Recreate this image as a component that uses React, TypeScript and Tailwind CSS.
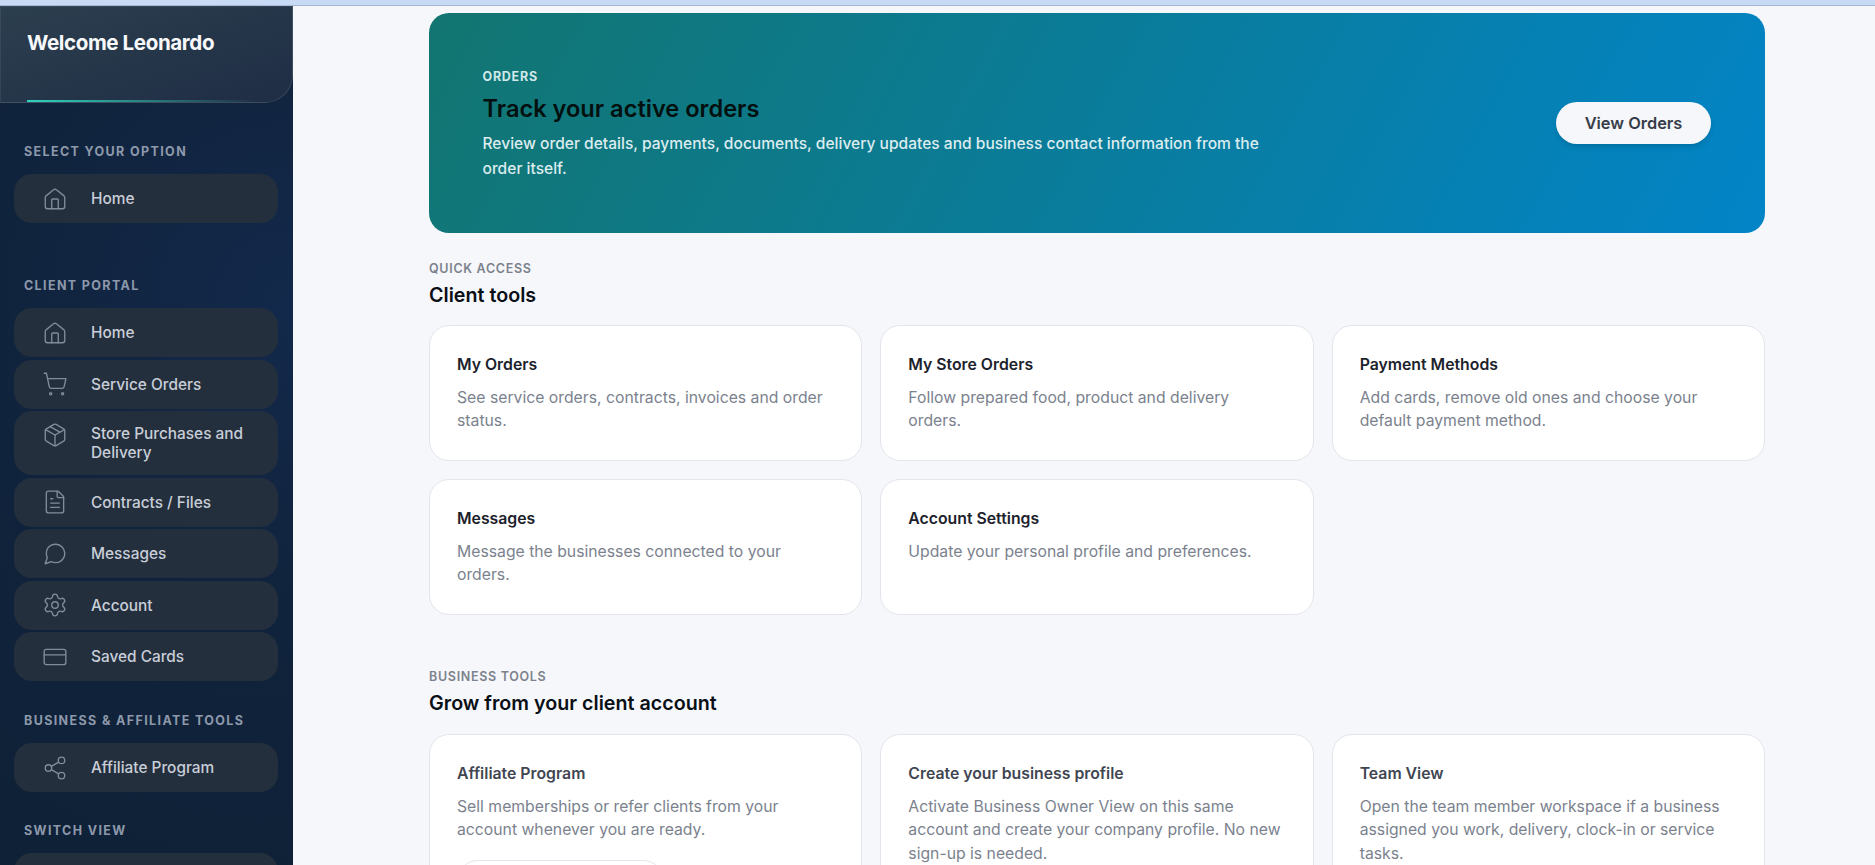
import { ShoppingCart, Package, FileText, Settings, CreditCard, Share2 } from "lucide-react"

const font = "[font-family:Inter,'Noto_Sans',sans-serif]"

type IconProps = { className?: string; strokeWidth?: number }

function HomeIcon({ className, strokeWidth }: IconProps) {
  return (
    <svg viewBox="0 0 24 24" fill="none" stroke="currentColor" strokeWidth={strokeWidth} strokeLinecap="round" strokeLinejoin="round" className={className}>
      <path d="M3 10.6c0-.6.3-1.1.7-1.5l7-5.6c.8-.6 1.8-.6 2.6 0l7 5.6c.4.4.7.9.7 1.5V19a2 2 0 0 1-2 2H5a2 2 0 0 1-2-2z" />
      <path d="M9 21v-8.2c0-.5.3-.8.8-.8h4.4c.5 0 .8.3.8.8V21" />
    </svg>
  )
}

function ChatIcon({ className, strokeWidth }: IconProps) {
  return (
    <svg viewBox="0 0 24 24" fill="none" stroke="currentColor" strokeWidth={strokeWidth} strokeLinecap="round" strokeLinejoin="round" className={className}>
      <path d="M21 11.5a8.38 8.38 0 0 1-.9 3.8 8.5 8.5 0 0 1-7.6 4.7 8.38 8.38 0 0 1-3.8-.9L3 21l1.9-5.7a8.38 8.38 0 0 1-.9-3.8 8.5 8.5 0 0 1 4.7-7.6 8.38 8.38 0 0 1 3.8-.9h.5a8.48 8.48 0 0 1 8 8v.5z" />
    </svg>
  )
}

function NavItem({ icon: Icon, label, tall }: { icon: React.ComponentType<IconProps>; label: string; tall?: boolean }) {
  return (
    <div className={`flex w-[264px] rounded-[18px] bg-[#242f3d] pl-[28px] pr-4 ${tall ? "h-[64px] pt-[13px]" : "h-[49px] items-center"}`}>
      <Icon strokeWidth={1.25} className={`h-[26px] w-[26px] shrink-0 text-[#818c9a] ${tall ? "-mt-[2px]" : ""}`} />
      <span className="ml-[23px] text-[15.4px] leading-[19px] font-medium text-[#c8ced8]">{label}</span>
    </div>
  )
}

function NavLabel({ children, className }: { children: React.ReactNode; className: string }) {
  return <div className={`pl-[24px] text-[12.5px] leading-[15px] font-bold tracking-[0.11em] text-[#8d99ab] ${className}`}>{children}</div>
}

function ToolCard({ title, text, muted, tall, children }: { title: string; text: string; muted?: boolean; tall?: boolean; children?: React.ReactNode }) {
  return (
    <div className={`rounded-[20px] border border-[#e2e5eb] bg-white pl-[27px] pr-[29px] pt-[29px] ${tall ? "h-[200px]" : "h-[136px]"}`}>
      <div className={`text-[15.8px] leading-[20px] font-semibold ${muted ? "text-[#3f4652]" : "text-[#1c222c]"}`}>{title}</div>
      <p className="mt-[11px] text-[15.75px] leading-[23.4px] text-[#7b828e]">{text}</p>
      {children}
    </div>
  )
}

export default function App() {
  return (
    <div className={`h-[865px] w-[1875px] overflow-hidden bg-[#f6f7fb] ${font}`}>
      <div className="h-[6px] border-b border-[#a5b5d6] bg-[#c9daf5]" />
      <div className="flex">
        <aside className="h-[859px] w-[293px] shrink-0 overflow-hidden bg-[radial-gradient(circle_at_100%_35%,#13294b_0%,#10233c_50%,#0f2136_100%)]">
          <div className="relative h-[97px] rounded-br-[28px] border border-[#ffffff1a] bg-gradient-to-br from-[#2c3f4e] to-[#1f2d45] pl-[26px] pt-[23px]">
            <div className="text-[20.6px] leading-[26px] font-bold tracking-[-0.02em] text-[#f6f8fa]">Welcome Leonardo</div>
            <div className="absolute bottom-0 left-[26px] h-[2px] w-[230px] bg-gradient-to-r from-[#2dd4bf] to-transparent" />
          </div>
          <NavLabel className="mt-[41px]">SELECT YOUR OPTION</NavLabel>
          <div className="mt-[15px] ml-[14px]"><NavItem icon={HomeIcon} label="Home" /></div>
          <NavLabel className="mt-[55px]">CLIENT PORTAL</NavLabel>
          <div className="mt-[15px] ml-[14px] flex flex-col gap-[2.5px]">
            <NavItem icon={HomeIcon} label="Home" />
            <NavItem icon={ShoppingCart} label="Service Orders" />
            <NavItem icon={Package} label="Store Purchases and Delivery" tall />
            <NavItem icon={FileText} label="Contracts / Files" />
            <NavItem icon={ChatIcon} label="Messages" />
            <NavItem icon={Settings} label="Account" />
            <NavItem icon={CreditCard} label="Saved Cards" />
          </div>
          <NavLabel className="mt-[32px]">BUSINESS &amp; AFFILIATE TOOLS</NavLabel>
          <div className="mt-[15px] ml-[14px]"><NavItem icon={Share2} label="Affiliate Program" /></div>
          <NavLabel className="mt-[31px]">SWITCH VIEW</NavLabel>
          <div className="mt-[15px] ml-[14px]"><NavItem icon={HomeIcon} label="" /></div>
        </aside>
        <main className="ml-[136px] w-[1336px] pt-[7px]">
          <section className="flex h-[220px] items-center justify-between rounded-[20px] bg-[linear-gradient(118deg,#127570,#0284c7)] pl-[53.5px] pr-[54px]">
            <div className="w-[800px] pt-[4px]">
              <div className="text-[12.5px] leading-[16px] font-bold tracking-[0.06em] text-[#cfe8e8]">ORDERS</div>
              <h2 className="mt-[9px] text-[23.6px] leading-[30px] font-semibold text-[#03100f]">Track your active orders</h2>
              <p className="mt-[8px] text-[15.57px] leading-[24.5px] font-medium text-[#dcecef]">Review order details, payments, documents, delivery updates and business contact information from the order itself.</p>
            </div>
            <button className="h-[42px] w-[155px] rounded-full bg-[#f6f7fb] text-[16.4px] font-semibold text-[#373d49] shadow-md">View Orders</button>
          </section>
          <div className="mt-[28px] text-[12.5px] leading-[16px] font-semibold tracking-[0.055em] text-[#7c828d]">QUICK ACCESS</div>
          <h3 className="mt-[5px] text-[19.7px] leading-[26px] font-semibold text-[#0a0f16]">Client tools</h3>
          <div className="mt-[17px] grid grid-cols-3 gap-[18px]">
            <ToolCard title="My Orders" text="See service orders, contracts, invoices and order status." />
            <ToolCard title="My Store Orders" text="Follow prepared food, product and delivery orders." />
            <ToolCard title="Payment Methods" text="Add cards, remove old ones and choose your default payment method." />
            <ToolCard title="Messages" text="Message the businesses connected to your orders." />
            <ToolCard title="Account Settings" text="Update your personal profile and preferences." />
          </div>
          <div className="mt-[54px] text-[12.5px] leading-[16px] font-semibold tracking-[0.055em] text-[#7c828d]">BUSINESS TOOLS</div>
          <h3 className="mt-[5px] text-[19.7px] leading-[26px] font-semibold text-[#0a0f16]">Grow from your client account</h3>
          <div className="mt-[18px] grid grid-cols-3 gap-[18px]">
            <ToolCard muted tall title="Affiliate Program" text="Sell memberships or refer clients from your account whenever you are ready.">
              <div className="mt-[18px] h-[42px] w-[207px] rounded-full border border-[#e2e5eb]" />
            </ToolCard>
            <ToolCard muted tall title="Create your business profile" text="Activate Business Owner View on this same account and create your company profile. No new sign-up is needed." />
            <ToolCard muted tall title="Team View" text="Open the team member workspace if a business assigned you work, delivery, clock-in or service tasks." />
          </div>
        </main>
      </div>
    </div>
  )
}
